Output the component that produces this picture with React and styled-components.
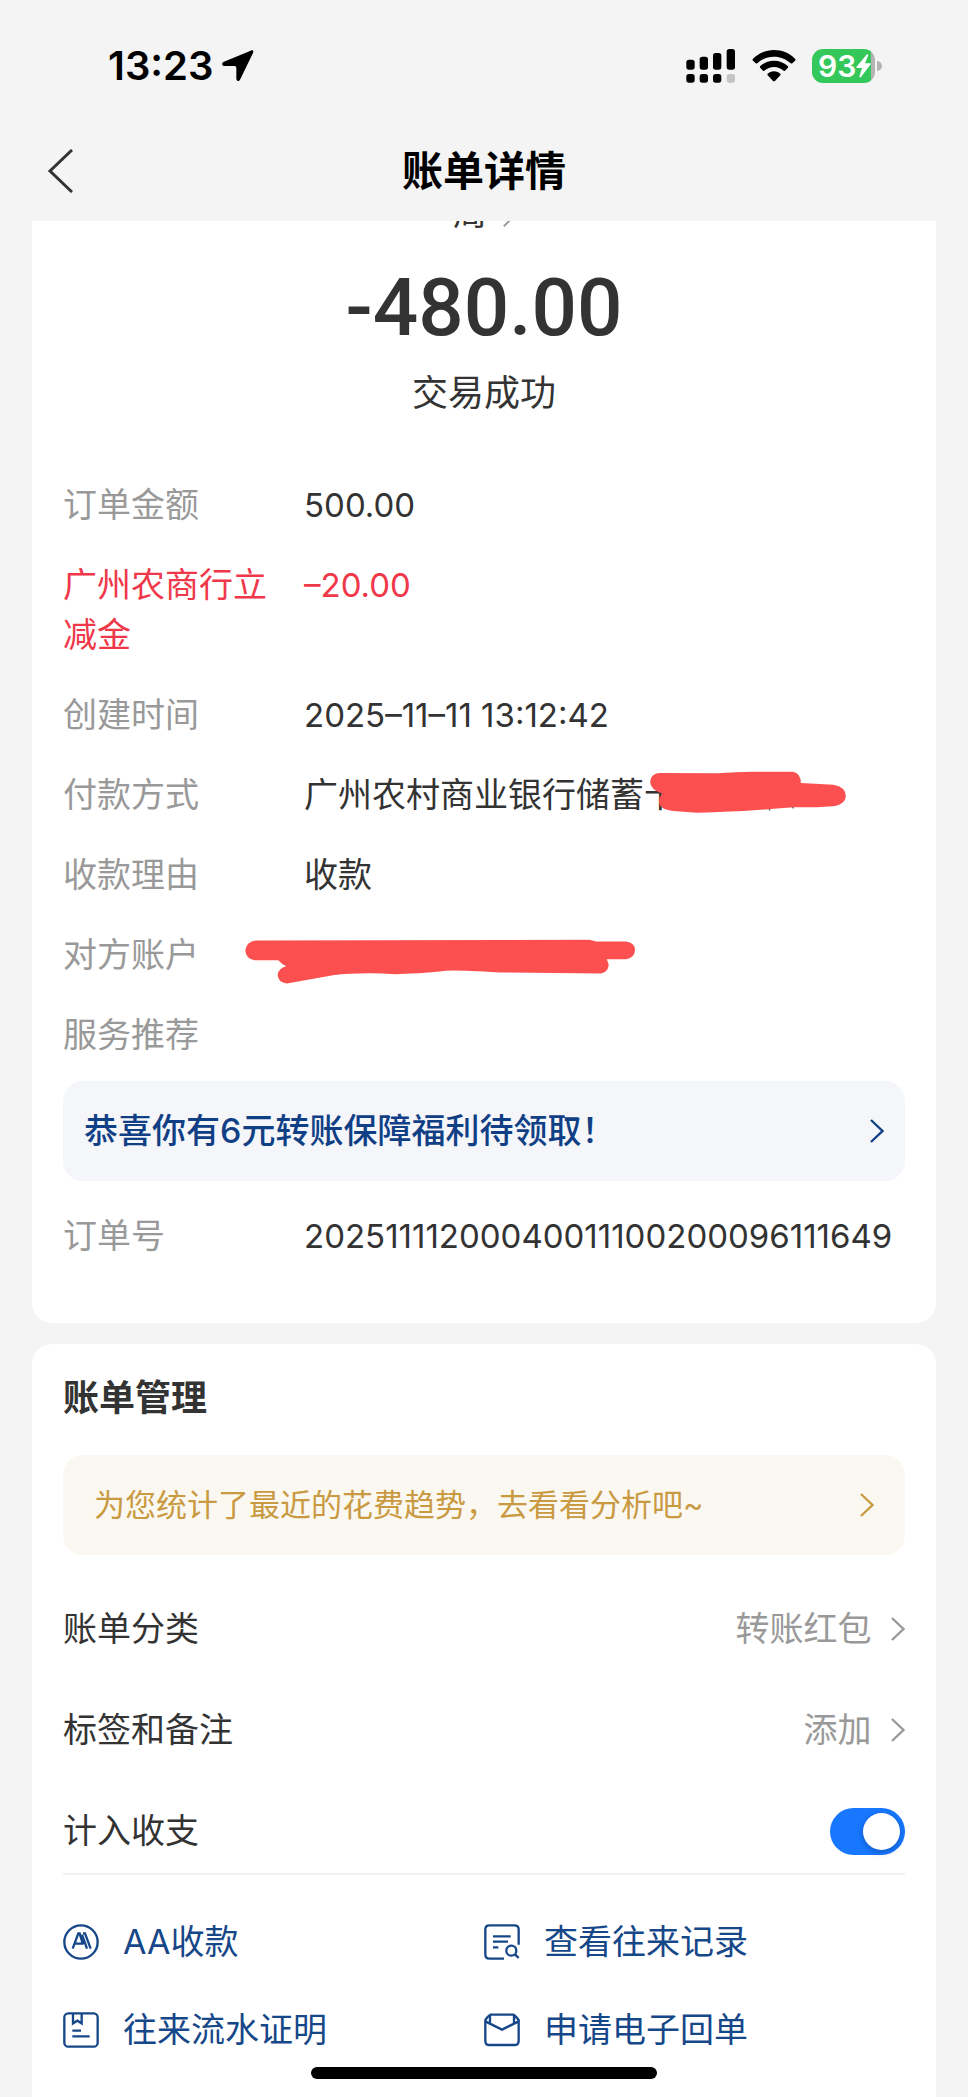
import React, { useState } from "react";
import styled, { createGlobalStyle } from "styled-components";

const GlobalStyle = createGlobalStyle`
  * {
    box-sizing: border-box;
  }
  body {
    margin: 0;
    background: #f4f4f4;
    color: #333;
    font-family: Inter, "Noto Sans CJK SC", sans-serif;
    font-size: 34px;
    line-height: 50px;
  }
  svg {
    display: block;
    flex: none;
  }
`;

const Page = styled.div`
  display: flex;
  flex-direction: column;
  min-height: 100vh;
`;

const StatusBar = styled.div`
  display: flex;
  align-items: center;
  justify-content: space-between;
  height: 120px;
  padding: 12px 86px 0 108px;
  color: #000;
`;

const Clock = styled.div`
  display: flex;
  align-items: center;
  gap: 8px;
  font-size: 40px;
  font-weight: 600;
`;

const Indicators = styled.div`
  display: flex;
  align-items: center;
  gap: 16px;
`;

const Battery = styled.div`
  display: flex;
  align-items: center;
  gap: 2px;
`;

const BatteryBody = styled.div`
  display: flex;
  align-items: center;
  width: 63px;
  height: 34px;
  padding-left: 6px;
  border-radius: 11px;
  background: linear-gradient(90deg, #34c759 94%, #b4b4b4 94%);
  color: #fff;
  font-size: 30px;
  font-weight: 600;
  line-height: 34px;
`;

const BatteryTip = styled.div`
  width: 5px;
  height: 10px;
  border-radius: 0 5px 5px 0;
  background: #b4b4b4;
`;

const NavBar = styled.header`
  display: grid;
  grid-template-columns: 1fr auto 1fr;
  align-items: center;
  height: 101px;
  padding: 0 47px;
`;

const BackButton = styled.button`
  justify-self: start;
  padding: 0;
  border: 0;
  background: none;
  color: #333;
`;

const NavTitle = styled.h1`
  margin: 0;
  color: #000;
  font-size: 41px;
  font-weight: 600;
`;

const Content = styled.main`
  display: flex;
  flex: 1;
  flex-direction: column;
  gap: 21px;
  padding: 0 32px;
`;

const Card = styled.section`
  flex-grow: ${(props) => (props.$fill ? 1 : 0)};
  padding: 0 31px;
  border-radius: ${(props) => (props.$fill ? "20px 20px 0 0" : "0 0 20px 20px")};
  background: #fff;
`;

// the payee line is half scrolled under the nav bar
const Payee = styled.div`
  display: flex;
  align-items: flex-end;
  justify-content: center;
  gap: 16px;
  height: 16px;
  padding-bottom: 7px;
  overflow: hidden;
  line-height: 34px;
`;

const PayeeArrow = styled.span`
  padding-bottom: 3px;
  color: #999;
`;

const Amount = styled.div`
  margin-top: 21px;
  font-family: Roboto, sans-serif;
  font-size: 80px;
  font-weight: 500;
  line-height: 100px;
  text-align: center;
`;

const TradeStatus = styled.div`
  margin-top: 10px;
  font-size: 36px;
  text-align: center;
`;

const Details = styled.dl`
  display: flex;
  flex-direction: column;
  gap: 30px;
  margin: ${(props) => (props.$first ? "62px 0 21px" : "30px 0 0")};
  padding-bottom: ${(props) => (props.$first ? 0 : 62)}px;
`;

const Detail = styled.div`
  display: grid;
  grid-template-columns: 211px 1fr;
  column-gap: 30px;
  color: ${(props) => (props.$red ? "#f0384b" : "#333")};
`;

const Label = styled.dt`
  color: ${(props) => (props.$red ? "inherit" : "#999")};
`;

const Value = styled.dd`
  position: relative;
  margin: 0;
  font-size: ${(props) => (props.$numeric ? 33 : 34)}px;
`;

const Scribble = styled.svg`
  position: absolute;
  top: ${(props) => props.$top}px;
  left: ${(props) => props.$left}px;
`;

const Banner = styled.a`
  display: flex;
  align-items: center;
  justify-content: space-between;
  height: 100px;
  padding: 0 ${(props) => (props.$gold ? 31 : 21)}px;
  border-radius: 20px;
  background: ${(props) => (props.$gold ? "#fbf8f1" : "#f4f6fa")};
  color: ${(props) => (props.$gold ? "#c99a42" : "#113f85")};
  font-size: ${(props) => (props.$gold ? 31 : 34)}px;
  font-weight: ${(props) => (props.$gold ? 400 : 500)};
  text-decoration: none;
`;

const CardTitle = styled.h2`
  margin: 0;
  padding: 29px 0 32px;
  font-size: 36px;
  font-weight: 600;
`;

const Settings = styled.div`
  display: flex;
  flex-direction: column;
  gap: 51px;
  margin-top: 49px;
  padding-bottom: 17px;
  border-bottom: 2px solid #f1f1f1;
`;

const SettingRow = styled.div`
  display: flex;
  align-items: center;
  justify-content: space-between;
`;

const SettingButton = styled.button`
  display: flex;
  align-items: center;
  gap: 19px;
  padding: 0;
  border: 0;
  background: none;
  color: #999;
  font: inherit;
`;

const Switch = styled.input`
  appearance: none;
  width: 75px;
  height: 47px;
  margin: 0;
  padding: 5px;
  border-radius: 24px;
  background: #ccc;

  &::before {
    content: "";
    display: block;
    width: 37px;
    height: 37px;
    border-radius: 50%;
    background: #fff;
    box-shadow: 0 2px 6px rgba(0, 0, 0, 0.25);
  }
  &:checked {
    background: #1777ff;
  }
  &:checked::before {
    margin-left: auto;
  }
`;

const Links = styled.nav`
  display: grid;
  grid-template-columns: 1fr 1fr;
  row-gap: 38px;
  padding: 42px 0;
`;

const ActionLink = styled.a`
  display: flex;
  align-items: center;
  gap: 24px;
  color: #164788;
  text-decoration: none;
`;

const HomeIndicator = styled.div`
  position: fixed;
  bottom: 18px;
  left: 50%;
  width: 346px;
  height: 12px;
  margin-left: -173px;
  border-radius: 6px;
  background: #000;
`;

const Chevron = ({ size = 24 }) => (
  <svg width={size * 0.6} height={size} viewBox="0 0 15 25" fill="none" stroke="currentColor" strokeWidth="2.4">
    <path d="M1 1L13 12.5L1 24" />
  </svg>
);

const LocationArrow = () => (
  <svg width="32" height="32" viewBox="0 0 96 96">
    <path d="M86 2L4 36C-2 40 0 48 6 48H38Q43 48 43 53V86C44 94 51 95 54 89L93 9C96 3 92 -1 86 2Z" />
  </svg>
);

const Signal = () => (
  <svg width="50" height="34" viewBox="0 0 150 102">
    <rect x="1" y="32" width="25" height="30" rx="8" />
    <rect x="41" y="23" width="25" height="39" rx="8" />
    <rect x="81" y="12" width="25" height="50" rx="8" />
    <rect x="122" y="0" width="25" height="62" rx="8" />
    <rect x="1" y="75" width="25" height="26" rx="8" />
    <rect x="41" y="75" width="25" height="26" rx="8" />
    <rect x="81" y="75" width="25" height="26" rx="8" />
    <rect x="122" y="75" width="25" height="26" rx="8" fill="#c4c4c4" />
  </svg>
);

const Wifi = () => (
  <svg width="44" height="34" viewBox="0 0 132 102">
    <path d="M66 3C41 3 19 13 3 29Q0 32 3 35L11 43Q14 45 17 42C30 30 47 23 66 23S102 30 115 42Q118 45 121 43L129 35Q132 32 129 29C113 13 91 3 66 3Z" />
    <path d="M66 35C50 35 36 41 25 51Q22 54 25 57L33 65Q36 67 39 64C46 58 55 54 66 54S86 58 93 64Q96 67 99 65L107 57Q110 54 107 51C96 41 82 35 66 35Z" />
    <path d="M66 67C58 67 52 70 47 74Q45 77 47 79L63 96Q66 98 69 96L85 79Q87 77 85 74C80 70 74 67 66 67Z" />
  </svg>
);

const Bolt = () => (
  <svg width="15" height="24" viewBox="0 0 45 72" fill="#fff">
    <path d="M33 1L1 39Q0 42 3 42H18L10 68Q11 72 15 69L44 31Q45 28 42 28H27L37 3Q36 0 33 1Z" />
  </svg>
);

const LinkIcon = ({ children }) => (
  <svg width="36" height="36" viewBox="0 0 108 108" fill="none" stroke="currentColor" strokeWidth="7">
    {children}
  </svg>
);

const links = [
  {
    text: "AA收款",
    icon: (
      <>
        <circle cx="54" cy="54" r="50" />
        <path d="M29 74L46 28H50L60 62M37 59H60M60 28H66L83 74M57 32L72 74" />
      </>
    ),
  },
  {
    text: "查看往来记录",
    icon: (
      <>
        <path d="M104 62V16Q104 4 91 4H16Q4 4 4 16V91Q4 104 16 104H60" />
        <path d="M27 37H80M27 53H72M27 70H43M93 91L104 102" />
        <circle cx="82" cy="80" r="15" />
      </>
    ),
  },
  {
    text: "往来流水证明",
    icon: (
      <>
        <rect x="4" y="4" width="100" height="100" rx="12" />
        <path d="M30 4V34L43 26L56 34V4M28 56H54M28 73H80" />
      </>
    ),
  },
  {
    text: "申请电子回单",
    icon: (
      <>
        <path d="M19 8H89Q95 12 104 24V86Q104 99 91 99H16Q4 99 4 86V24Q12 12 19 8Z" />
        <path d="M4 28L54 53L104 28M18 9V34M90 9V34" />
      </>
    ),
  },
];

const App = () => {
  const [counted, setCounted] = useState(true);

  return (
    <Page>
      <GlobalStyle />
      <StatusBar>
        <Clock>
          13:23
          <LocationArrow />
        </Clock>
        <Indicators>
          <Signal />
          <Wifi />
          <Battery>
            <BatteryBody>
              93
              <Bolt />
            </BatteryBody>
            <BatteryTip />
          </Battery>
        </Indicators>
      </StatusBar>
      <NavBar>
        <BackButton aria-label="返回">
          <svg width="26" height="44" viewBox="0 0 26 44" fill="none" stroke="currentColor" strokeWidth="3">
            <path d="M25 1L3 22L25 43" />
          </svg>
        </BackButton>
        <NavTitle>账单详情</NavTitle>
      </NavBar>

      <Content>
        <Card>
          <Payee>
            周
            <PayeeArrow>
              <Chevron size={20} />
            </PayeeArrow>
          </Payee>
          <Amount>-480.00</Amount>
          <TradeStatus>交易成功</TradeStatus>
          <Details $first>
            <Detail>
              <Label>订单金额</Label>
              <Value $numeric>500.00</Value>
            </Detail>
            <Detail $red>
              <Label $red>广州农商行立减金</Label>
              <Value $numeric>–20.00</Value>
            </Detail>
            <Detail>
              <Label>创建时间</Label>
              <Value $numeric>2025–11–11 13:12:42</Value>
            </Detail>
            <Detail>
              <Label>付款方式</Label>
              <Value>
                广州农村商业银行储蓄卡
                <Scribble $top={1} $left={346} width="197" height="42" viewBox="500 90 590 126">
                  <path d="M862 198L857 208M926 197L930 202" stroke="#555" strokeWidth="4" />
                  <path
                    fill="#fc5050"
                    d="M528 96L700 97Q760 92 810 92H928Q952 96 952 126L1050 131Q1087 138 1087 165Q1085 192 1045 196L1000 199H930L890 202L780 210Q700 214 640 215L570 210Q526 206 526 180Q528 165 536 158Q500 145 500 122Q502 98 528 96Z"
                  />
                </Scribble>
              </Value>
            </Detail>
            <Detail>
              <Label>收款理由</Label>
              <Value>收款</Value>
            </Detail>
            <Detail>
              <Label>对方账户</Label>
              <Value>
                <Scribble $top={9} $left={-59} width="391" height="45" viewBox="136 118 1174 134">
                  <path
                    fill="#fc5050"
                    d="M168 122L1170 120Q1185 123 1190 125H1280Q1307 128 1307 151Q1305 175 1280 178H1222Q1228 190 1228 198Q1224 218 1205 221L900 218Q760 210 740 213Q690 220 590 223Q480 217 400 226L262 251Q235 248 234 225Q236 205 260 199Q245 192 236 181H165Q138 177 137 151Q140 126 168 122Z"
                  />
                </Scribble>
              </Value>
            </Detail>
            <Detail>
              <Label>服务推荐</Label>
            </Detail>
          </Details>
          <Banner href="#">
            恭喜你有6元转账保障福利待领取！
            <Chevron />
          </Banner>
          <Details>
            <Detail>
              <Label>订单号</Label>
              <Value $numeric>20251111200040011100200096111649</Value>
            </Detail>
          </Details>
        </Card>

        <Card $fill>
          <CardTitle>账单管理</CardTitle>
          <Banner $gold href="#">
            为您统计了最近的花费趋势，去看看分析吧~
            <Chevron />
          </Banner>
          <Settings>
            <SettingRow>
              <span id="category">账单分类</span>
              <SettingButton aria-describedby="category">
                转账红包
                <Chevron />
              </SettingButton>
            </SettingRow>
            <SettingRow>
              <span id="remark">标签和备注</span>
              <SettingButton aria-describedby="remark">
                添加
                <Chevron />
              </SettingButton>
            </SettingRow>
            <SettingRow>
              <label htmlFor="counted">计入收支</label>
              <Switch
                id="counted"
                type="checkbox"
                role="switch"
                checked={counted}
                onChange={(e) => setCounted(e.target.checked)}
              />
            </SettingRow>
          </Settings>
          <Links>
            {links.map((link) => (
              <ActionLink href="#" key={link.text}>
                <LinkIcon>{link.icon}</LinkIcon>
                {link.text}
              </ActionLink>
            ))}
          </Links>
        </Card>
      </Content>
      <HomeIndicator />
    </Page>
  );
};

export default App;
